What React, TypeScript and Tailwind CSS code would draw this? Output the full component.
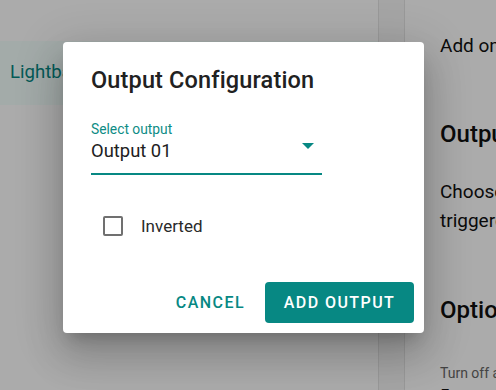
import { useState } from "react";

const font = { fontFamily: "Roboto, 'Liberation Sans', sans-serif" };

export default function App() {
    const [inverted, setInverted] = useState(false);

    return (
        <div style={font} className="relative w-[496px] h-[390px] overflow-hidden bg-white text-[#212121]">
            {/* Page behind the dialog */}
            <div className="flex h-full">
                <aside className="w-[378px] shrink-0 pt-[41px]">
                    <div className="h-[64px] bg-[#f3fffd] flex items-center pl-[10px] text-[18.6px] text-[#078883]">
                        Lightbar
                    </div>
                </aside>

                <div className="w-[27px] shrink-0 bg-[#f7f7f7] border-x border-[#e4e4e4]" />

                <main className="w-[420px] shrink-0 pl-[35px] pt-[32px] whitespace-nowrap text-[#111]">
                    <p className="text-[19px] leading-[28px]">Add one or more outputs to this lightbar.</p>

                    <h2 className="mt-[58px] text-[24px] leading-[32px] font-medium">Outputs</h2>
                    <p className="mt-[27px] text-[19px] leading-[29px]">
                        Choose the outputs that will be
                        <br />
                        triggered by this lightbar.
                    </p>

                    <h2 className="mt-[59px] text-[24px] leading-[32px] font-medium">Options</h2>
                    <p className="mt-[37px] text-[14px] leading-[20px] text-[#666]">Turn off after a delay</p>
                    <p className="mt-[1px] text-[17px] font-bold leading-[22px]">5 seconds</p>
                </main>
            </div>

            {/* Scrim */}
            <div className="absolute inset-0 bg-black/[0.33]" />

            {/* Dialog */}
            <div className="absolute left-[63px] top-[42px] w-[361px] rounded-[4px] bg-white shadow-[0_11px_15px_-7px_rgba(0,0,0,0.2),0_24px_38px_3px_rgba(0,0,0,0.14),0_9px_46px_8px_rgba(0,0,0,0.12)]">
                <div className="px-[28px] pt-[22px]">
                    <h1 className="text-[23.5px] leading-[32px] font-medium tracking-[0.15px]">Output Configuration</h1>

                    <div className="mt-[25px] w-[231px] border-b-2 border-[#078883] pb-[10px] relative">
                        <div className="text-[13.8px] leading-[16px] text-[#0d8c85]">Select output</div>
                        <div className="mt-[2px] text-[18.4px] leading-[24px]">Output 01</div>
                        <svg
                            className="absolute right-[8px] top-[22px]"
                            width="12"
                            height="6"
                            viewBox="0 0 12 6"
                        >
                            <path d="M0 0 L12 0 L6 6 Z" fill="#078883" />
                        </svg>
                    </div>

                    <label className="mt-[31px] h-[40px] flex items-center cursor-pointer">
                        <span className="ml-[12px] w-[20px] h-[20px] rounded-[2px] border-[2.3px] border-[#707070] flex items-center justify-center">
                            <input
                                type="checkbox"
                                className="sr-only"
                                checked={inverted}
                                onChange={() => setInverted(!inverted)}
                            />
                        </span>
                        <span className="ml-[18px] text-[17px] leading-[20px] text-[#2a2a2a]">Inverted</span>
                    </label>
                </div>

                <div className="mt-[36px] flex justify-end items-center gap-[11px] pr-[10px] pb-[10px]">
                    <button className="h-[41px] px-[9px] text-[16px] font-medium tracking-[1.44px] text-[#078883]">
                        CANCEL
                    </button>
                    <button className="h-[41px] w-[149px] rounded-[4px] bg-[#078883] text-[16px] font-medium tracking-[1.44px] text-white">
                        ADD OUTPUT
                    </button>
                </div>
            </div>
        </div>
    );
}
